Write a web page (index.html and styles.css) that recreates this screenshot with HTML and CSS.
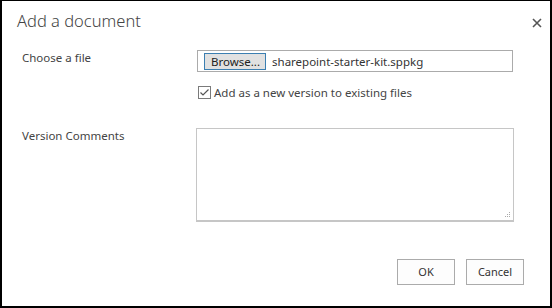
FILE: index.html
```html
<!DOCTYPE html>
<html lang="en">
<head>
    <meta charset="UTF-8">
    <title>Add a document</title>
    <link rel="stylesheet" href="styles.css">
</head>
<body>
    <div class="dialog">
        <div class="dialog-head">
            <h1 class="title">Add a document</h1>
            <span class="close">
                <svg width="10" height="10" viewBox="0 0 10 10"><path d="M1 1L9 9M9 1L1 9" stroke="#555" stroke-width="1.6"/></svg>
            </span>
        </div>

        <div class="row file-row">
            <div class="label">Choose a file</div>
            <div class="field">
                <div class="file-box">
                    <span class="browse">Browse...</span>
                    <span class="file-name">sharepoint-starter-kit.sppkg</span>
                </div>
                <label class="check">
                    <span class="check-box">
                        <svg width="13" height="13" viewBox="0 0 13 13"><rect x="0.5" y="0.5" width="12" height="12" fill="#fff" stroke="#7a7a7a"/><path d="M2.5 6.5L5 9L10.5 3.5" fill="none" stroke="#555" stroke-width="1.2"/></svg>
                    </span>
                    Add as a new version to existing files
                </label>
            </div>
        </div>

        <div class="row comment-row">
            <div class="label">Version Comments</div>
            <div class="field">
                <div class="comments">
                    <svg class="grip" width="7" height="7" viewBox="0 0 7 7"><rect x="5" y="0" width="1" height="1" fill="#aaa"/><rect x="5" y="2" width="1" height="1" fill="#aaa"/><rect x="3" y="2" width="1" height="1" fill="#aaa"/><rect x="5" y="4" width="1" height="1" fill="#aaa"/><rect x="3" y="4" width="1" height="1" fill="#aaa"/><rect x="1" y="4" width="1" height="1" fill="#aaa"/></svg>
                </div>
            </div>
        </div>

        <div class="buttons">
            <span class="btn">OK</span>
            <span class="btn">Cancel</span>
        </div>
    </div>
</body>
</html>
```

FILE: styles.css
```css
body {
    margin: 0;
    font-family: "Noto Sans", "Open Sans", sans-serif;
    color: #444;
}
.dialog {
    width: 552px;
    height: 308px;
    box-sizing: border-box;
    border: 2px solid #000;
    border-top-width: 1px;
    background: #fff;
    display: flex;
    flex-direction: column;
}
.dialog-head {
    display: flex;
    justify-content: space-between;
    padding: 7px 8px 0 15px;
}
.title {
    margin: 0;
    font-size: 16.5px;
    font-weight: 300;
    color: #444;
    line-height: 26px;
}
.close {
    padding-top: 3px;
}
.row {
    display: grid;
    grid-template-columns: 174px 1fr;
    padding-left: 20px;
}
.label {
    font-size: 11.5px;
    line-height: 16px;
}
.file-row {
    margin-top: 16px;
}
.file-box {
    width: 316px;
    height: 22px;
    box-sizing: border-box;
    border: 1px solid #ababab;
    display: flex;
    align-items: center;
    gap: 6px;
    padding-left: 6px;
    margin-left: 1px;
}
.browse {
    height: 17px;
    line-height: 15px;
    box-sizing: border-box;
    border: 1px solid #3c7fb1;
    background: #e1e1e1;
    padding: 0 5px 0 6px;
    font-size: 11.5px;
    color: #222;
}
.file-name {
    font-size: 11.5px;
    color: #333;
}
.check {
    display: flex;
    align-items: center;
    gap: 3px;
    margin-top: 13px;
    margin-left: 2px;
    font-size: 11.5px;
}
.check-box {
    display: flex;
}
.comment-row {
    margin-top: 28px;
}
.comments {
    width: 316px;
    height: 91px;
    border: 1px solid #c6c6c6;
    border-bottom-width: 2px;
    position: relative;
}
.grip {
    position: absolute;
    right: 2px;
    bottom: 1px;
}
.buttons {
    margin-top: auto;
    margin-bottom: 21px;
    display: flex;
    justify-content: flex-end;
    gap: 11px;
    padding-right: 26px;
}
.btn {
    width: 56px;
    height: 24px;
    border: 1px solid #ababab;
    background: #fdfdfd;
    text-align: center;
    line-height: 24px;
    font-size: 11px;
    color: #333;
}
```
